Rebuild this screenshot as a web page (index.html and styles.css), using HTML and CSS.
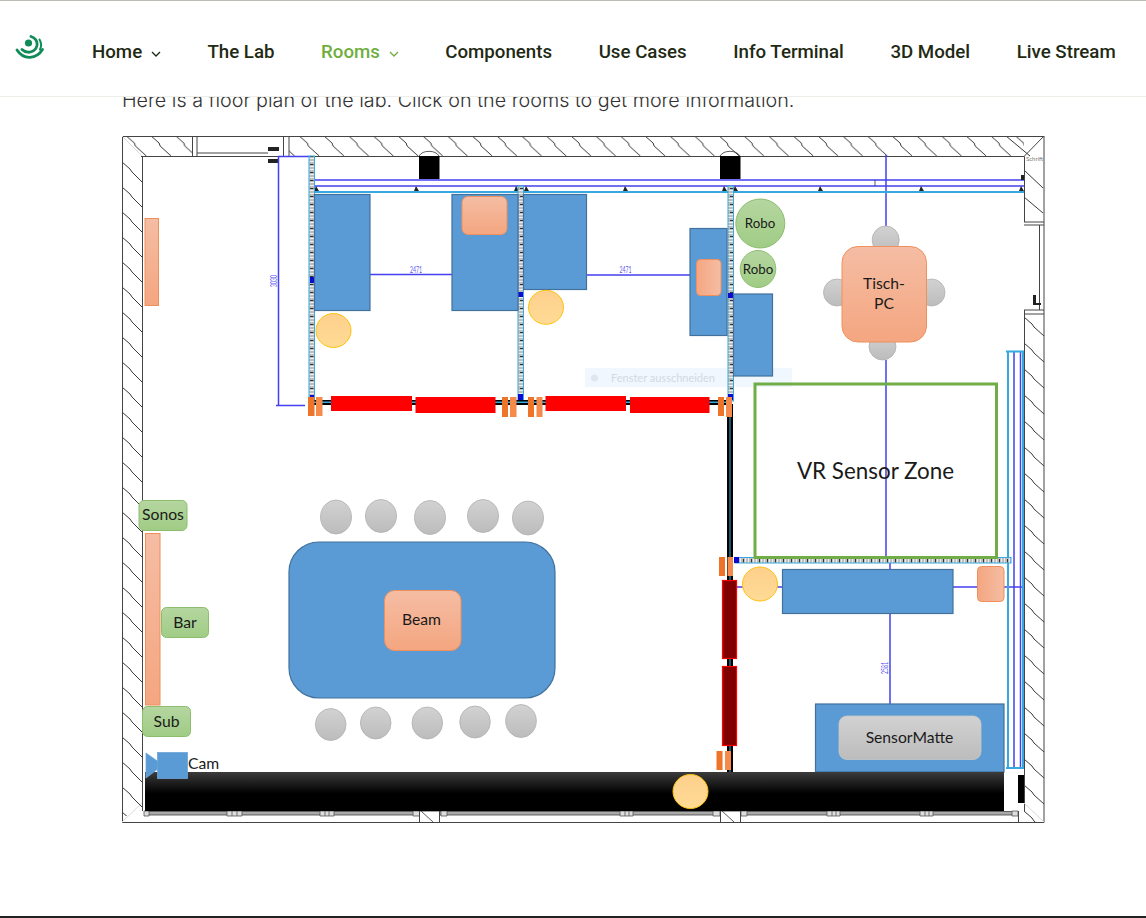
FILE: index.html
```html
<!DOCTYPE html>
<html>
  <head>
    <meta charset="UTF-8" />
    <title>Rooms</title>
    <link rel="stylesheet" href="styles.css">
  </head>

  <body>
    <header class="site-header">
      <a class="logo" href="#">
        <svg width="30" height="26" viewBox="0 0 30 26">
          <circle class="logo-dot" cx="13.500" cy="8" r="3.600"/>
          <path class="logo-arc" d="M16 1.500C20.500 3 22.500 6.500 22 10.500C21.200 15 17 17.500 13 17.200C10.500 17 8.500 16 7 14.500"/>
          <path class="logo-arc" d="M2 15C5.500 20.500 10 22.500 15 22.300C20 22 24.500 19.500 27.500 14.500"/>
          <path class="logo-arc-thin" d="M24.500 4.500C26.500 8 26.500 11.500 25 14.500"/>
        </svg>
      </a>
      <nav class="main-nav">
        <a href="#">Home <svg class="chevron" width="10" height="6" viewBox="0 0 10 6"><path d="M1 1l4 4 4-4"/></svg></a>
        <a href="#">The Lab</a>
        <a href="#" class="current">Rooms <svg class="chevron" width="10" height="6" viewBox="0 0 10 6"><path d="M1 1l4 4 4-4"/></svg></a>
        <a href="#">Components</a>
        <a href="#">Use Cases</a>
        <a href="#">Info Terminal</a>
        <a href="#">3D Model</a>
        <a href="#">Live Stream</a>
      </nav>
    </header>

    <main class="content">
      <p class="intro">Here is a floor plan of the lab. Click on the rooms to get more information.</p>

      <svg class="floorplan" width="923" height="688" viewBox="122 136 923 688">
        <defs>
          <pattern id="hatch-top" x="126.400" y="136" width="24.700" height="20" patternUnits="userSpaceOnUse">
            <path d="M0 0L8 7L9 10L20 20" class="hatch"/>
          </pattern>
          <pattern id="hatch-left" x="122" y="162" width="20" height="25" patternUnits="userSpaceOnUse">
            <path d="M0 0L8 7L10 10L20 20" class="hatch"/>
          </pattern>
          <pattern id="hatch-right" x="1024" y="317" width="20" height="26" patternUnits="userSpaceOnUse">
            <path d="M0 0L8 7L10 10L20 19" class="hatch"/>
          </pattern>
          <pattern id="studs-v" x="309" y="156" width="6" height="8" patternUnits="userSpaceOnUse">
            <rect width="6" height="8" fill="#bdbdbd"/>
            <rect y="2" width="6" height="1" fill="#eee"/>
            <rect y="5" width="6" height="1" fill="#eee"/>
            <rect x="1" y="0" width="3.500" height="1" fill="#333"/>
          </pattern>
          <pattern id="studs-h" x="735" y="558" width="8" height="6" patternUnits="userSpaceOnUse">
            <rect width="8" height="6" fill="#bdbdbd"/>
            <rect x="2" width="1" height="6" fill="#eee"/>
            <rect x="5" width="1" height="6" fill="#eee"/>
            <rect x="0" y="1" width="1" height="3.500" fill="#333"/>
          </pattern>
          <linearGradient id="peach" x1="0" y1="0" x2="0" y2="1">
            <stop offset="0" stop-color="#f5bda4"/>
            <stop offset="1" stop-color="#f4a680"/>
          </linearGradient>
          <linearGradient id="peach-h" x1="0" y1="0" x2="1" y2="0">
            <stop offset="0" stop-color="#f4a680"/>
            <stop offset="1" stop-color="#f5bda4"/>
          </linearGradient>
          <linearGradient id="sun" x1="0" y1="0" x2="0" y2="1">
            <stop offset="0" stop-color="#fdd08c"/>
            <stop offset="1" stop-color="#ffdb95"/>
          </linearGradient>
          <linearGradient id="leaf" x1="0" y1="0" x2="0" y2="1">
            <stop offset="0" stop-color="#b5d6a0"/>
            <stop offset="1" stop-color="#a0cc85"/>
          </linearGradient>
          <linearGradient id="stone" x1="0" y1="0" x2="0" y2="1">
            <stop offset="0" stop-color="#d2d2d2"/>
            <stop offset="1" stop-color="#bcbcbc"/>
          </linearGradient>
          <linearGradient id="bar" x1="0" y1="0" x2="0" y2="1">
            <stop offset="0" stop-color="#3c3c3c"/>
            <stop offset="0.55" stop-color="#000"/>
            <stop offset="1" stop-color="#000"/>
          </linearGradient>
        </defs>

        <!-- walls -->
        <rect x="122" y="136" width="70" height="20" fill="url(#hatch-top)"/>
        <rect x="289" y="136" width="735" height="20" fill="url(#hatch-top)"/>
        <rect x="122" y="156" width="20" height="660" fill="url(#hatch-left)"/>
        <rect x="1024" y="310" width="20" height="512" fill="url(#hatch-right)"/>
        <path class="hatch" d="M1024 170L1043 188M1024 197L1043 213M1006 136L1030 156"/>
        <path class="wall" d="M122.500 136.500H1044M122.500 136.500V822.500H1044V136M142.500 156.500V811M142 156.500H1024.500V222M1024.500 310V811M1024 222H1044M1024 225H1044M1024 310H1044M1024 314H1044M1039.500 225V310M192.500 136V156M197 136V156M283.500 136V156M289 136V156M197 153H268M1024.500 156L1044 136M1018.500 811V822"/>
        <path class="wall-pale" d="M122 136L142 156M122 822L142 803M1024 803L1044 822"/>
        <path class="mark" d="M268 147h11v4h-11zM268 159h11v4h-11zM1033 295h3v8h5v2h-8z"/>
        <rect class="black" x="419" y="156" width="20.500" height="23"/>
        <rect class="black" x="720" y="156" width="20.500" height="23"/>
        <path class="thin" d="M419 156A11 8 0 0 1 439 156M720 156A11 8 0 0 1 740 156"/>
        <text class="tiny" x="1026" y="161">Schrift</text>

        <!-- ghost tooltip from the snipping tool -->
        <rect class="ghost" x="585" y="368" width="207" height="19"/>
        <circle class="ghost-dot" cx="594.500" cy="378" r="3.500"/>
        <text class="ghost-text" x="611" y="382">Fenster ausschneiden</text>

        <!-- dimension lines -->
        <path class="dim" d="M278.500 156V405M278 156.500H310M276 405.500H305M314 180H1024M314 186H1024M886 155V247M886 360V383M886 384V563M370 274.500H452M587 275H690M890 563V569M890 613V704M735 587H782M953 587H977M1004 587H1024M1014 351V768M1020.500 351V768"/>
        <path class="cyan" d="M314 192H680M680 192H1024M1008 351V768M1023 351V768M1006 351.500H1024M1006 768H1024"/>
        <path class="thin" d="M875 180V186"/>
        <text class="dim-text" x="410" y="273" textLength="12" lengthAdjust="spacingAndGlyphs">2471</text>
        <text class="dim-text" x="619.500" y="273" textLength="12" lengthAdjust="spacingAndGlyphs">2471</text>
        <text class="dim-text" transform="translate(277 287) rotate(-90)" textLength="12" lengthAdjust="spacingAndGlyphs">3030</text>
        <text class="dim-text" transform="translate(888 674) rotate(-90)" textLength="12" lengthAdjust="spacingAndGlyphs">2581</text>
        <path class="mark" d="M316 186l-2 5h5zM416 186l-2 5h5zM516 186l-2 5h5zM526 186l-2 5h5zM625 186l-2 5h5zM724 186l-2 5h5zM735 186l-2 5h5zM820 186l-2 5h5zM921 186l-2 5h5zM1021 186l-2 5h5zM1021 175h3v5h-3z"/>

        <!-- partitions -->
        <rect class="stud" x="309" y="156" width="5.500" height="245" fill="url(#studs-v)"/>
        <rect class="stud" x="518" y="186" width="5.500" height="215" fill="url(#studs-v)"/>
        <rect class="stud" x="728" y="186" width="5.500" height="215" fill="url(#studs-v)"/>
        <rect class="black" x="314" y="400" width="414" height="5"/>
        <rect class="cyan-fill" x="314" y="401.500" width="414" height="1.500"/>
        <rect class="stud" x="735" y="557.500" width="276" height="5.500" fill="url(#studs-h)"/>
        <rect class="black" x="727" y="404" width="6" height="368"/>
        <rect class="cyan-fill" x="729.500" y="404" width="1" height="368"/>
        <path class="mark-blue" d="M310 277h4v6h-4zM518 292h5v5h-5zM728 293h5v5h-5zM310 395h4v6h-4zM518 394h5v6h-5zM728 394h5v6h-5zM734 557h5v6h-5z"/>

        <!-- desks -->
        <rect class="desk" x="314.500" y="194.500" width="55.500" height="116"/>
        <rect class="desk" x="452" y="194.500" width="66" height="116"/>
        <rect class="desk" x="523.500" y="194.500" width="63" height="95"/>
        <rect class="desk" x="690" y="228.500" width="37" height="107"/>
        <rect class="desk" x="733.500" y="294" width="39" height="82"/>
        <rect class="desk" x="782.500" y="569.500" width="170.500" height="44"/>
        <rect class="desk" x="815.500" y="704" width="188.500" height="68"/>
        <rect class="desk" x="289" y="542" width="266" height="156" rx="30"/>

        <rect class="peach" x="462" y="196.500" width="45" height="38" rx="6"/>
        <rect class="peach-h" x="696.500" y="259.500" width="24.500" height="36" rx="4"/>
        <rect class="peach-h" x="977.500" y="566.500" width="26.500" height="35" rx="4"/>
        <rect class="peach" x="145" y="218.500" width="13.500" height="87"/>
        <rect class="peach" x="145.500" y="533.500" width="14.500" height="171.500"/>

        <!-- seats -->
        <ellipse class="seat" cx="885.700" cy="240" rx="13.500" ry="14"/>
        <ellipse class="seat" cx="882.500" cy="346.500" rx="13.500" ry="13.500"/>
        <ellipse class="seat" cx="837" cy="292.500" rx="13.500" ry="13.500"/>
        <ellipse class="seat" cx="931.500" cy="292.500" rx="13.500" ry="13.500"/>
        <ellipse class="seat" cx="336" cy="517" rx="15.500" ry="17"/>
        <ellipse class="seat" cx="381" cy="516" rx="15.500" ry="16.500"/>
        <ellipse class="seat" cx="430" cy="517.500" rx="15.500" ry="17"/>
        <ellipse class="seat" cx="483" cy="516" rx="15.500" ry="16.500"/>
        <ellipse class="seat" cx="528" cy="518" rx="15.500" ry="17"/>
        <ellipse class="seat" cx="330.700" cy="724.500" rx="15.300" ry="16"/>
        <ellipse class="seat" cx="375.700" cy="723" rx="15.300" ry="16"/>
        <ellipse class="seat" cx="427.300" cy="723" rx="15.300" ry="16"/>
        <ellipse class="seat" cx="475" cy="722" rx="15.300" ry="16"/>
        <ellipse class="seat" cx="521" cy="721" rx="15.300" ry="16.500"/>

        <rect class="peach" x="842" y="246.500" width="84.500" height="95.500" rx="16"/>
        <text class="label" x="884" y="289" text-anchor="middle">Tisch-</text>
        <text class="label" x="884" y="309" text-anchor="middle">PC</text>
        <rect class="peach" x="384.500" y="590.500" width="76.500" height="60" rx="10"/>
        <text class="label" x="421.500" y="625" text-anchor="middle">Beam</text>

        <!-- people -->
        <ellipse class="person" cx="333.500" cy="330.500" rx="17.500" ry="17"/>
        <ellipse class="person" cx="546" cy="307.300" rx="17.500" ry="17"/>
        <ellipse class="person" cx="760" cy="584" rx="17.500" ry="17"/>

        <!-- robots and green boxes -->
        <ellipse class="leaf" cx="760.300" cy="223.500" rx="24.500" ry="24.500"/>
        <ellipse class="leaf" cx="758" cy="269" rx="17.800" ry="18.500"/>
        <text class="label-small" x="760" y="228" text-anchor="middle">Robo</text>
        <text class="label-small" x="758" y="274" text-anchor="middle">Robo</text>
        <rect class="leaf" x="139" y="500.500" width="48" height="30" rx="5"/>
        <rect class="leaf" x="161.500" y="607.500" width="47" height="30" rx="5"/>
        <rect class="leaf" x="142.500" y="706.500" width="48" height="30" rx="5"/>
        <text class="label" x="163" y="520" text-anchor="middle">Sonos</text>
        <text class="label" x="185" y="627.500" text-anchor="middle">Bar</text>
        <text class="label" x="166.500" y="726.500" text-anchor="middle">Sub</text>
        <text class="label" x="188" y="769">Cam</text>

        <!-- sliding doors -->
        <rect class="red" x="331" y="396" width="81" height="15"/>
        <rect class="red" x="415.500" y="397" width="80" height="16"/>
        <rect class="red" x="545.500" y="396" width="80.500" height="15"/>
        <rect class="red" x="630" y="397" width="79.500" height="16"/>
        <rect class="dark-red" x="722.500" y="580.500" width="14" height="78"/>
        <rect class="dark-red" x="722.500" y="666.500" width="14" height="79"/>
        <rect class="orange" x="308" y="397" width="6.500" height="19"/>
        <rect class="orange-light" x="316" y="397" width="6.500" height="19"/>
        <rect class="orange" x="502" y="397" width="6" height="20"/>
        <rect class="orange-light" x="510" y="397" width="6.500" height="20"/>
        <rect class="orange" x="528" y="397" width="6" height="20"/>
        <rect class="orange-light" x="536.500" y="397" width="6" height="20"/>
        <rect class="orange" x="718" y="397" width="6" height="19"/>
        <rect class="orange-light" x="726" y="397" width="6" height="20"/>
        <rect class="orange" x="719" y="557" width="6" height="19"/>
        <rect class="orange-light" x="727.500" y="557" width="5.500" height="19"/>
        <rect class="orange" x="716.500" y="751" width="6" height="19"/>
        <rect class="orange-light" x="725" y="751" width="6" height="19"/>

        <!-- VR zone -->
        <rect class="zone" x="755" y="384" width="241.500" height="173.500"/>
        <text class="label-large" x="875.500" y="479" text-anchor="middle">VR Sensor Zone</text>

        <rect class="stone" x="839" y="716" width="142" height="43.500" rx="8"/>
        <text class="label" x="909.500" y="742.500" text-anchor="middle">SensorMatte</text>

        <!-- bar along the bottom wall -->
        <rect class="sill" x="145" y="811.500" width="873" height="3.500"/>
        <path class="connector" d="M227 811h15v5h-15zM232 811v5M237 811v5M320 811h14v5h-14zM325 811v5M329 811v5M413 811h7v5h-7zM441 811h6v5h-6zM620 811h13v5h-13zM625 811v5M629 811v5M713 811h7v5h-7zM741 811h6v5h-6zM827 811h13v5h-13zM832 811v5M836 811v5M920 811h13v5h-13zM925 811v5M929 811v5M1012 811h6v5h-6zM144 811h5v5h-5z"/>
        <rect class="post" x="419.500" y="811" width="20" height="11.500"/>
        <rect class="post" x="720.500" y="811" width="20" height="11.500"/>
        <path class="thin" d="M421 811L433 822M722 811L734 822"/>
        <rect x="145" y="772" width="859" height="39" fill="url(#bar)"/>
        <rect class="black" x="1018" y="775" width="6" height="28"/>
        <ellipse class="person" cx="690.500" cy="791.500" rx="17.500" ry="17"/>

        <!-- camera sits over the bar -->
        <path class="desk-plain" d="M146 753L163 765L146 778Z"/>
        <rect class="desk-plain" x="157.500" y="752.500" width="30" height="26"/>
      </svg>
    </main>

    <footer class="site-footer"></footer>
  </body>
</html>
```

FILE: styles.css
```css
body {
  margin: 0;
  height: 918px;
  overflow: hidden;
  background-color: white;
  font-family: "Inter", "Liberation Sans", sans-serif;
  position: relative;
}

.site-header {
  position: absolute;
  top: 0;
  left: 0;
  right: 0;
  z-index: 2;
  height: 95px;
  display: flex;
  align-items: center;
  background-color: white;
  border-top: 1px solid #bdbdb8;
  border-bottom: 1px solid #eeeee8;
  box-sizing: content-box;
}

.logo {
  display: flex;
  margin-left: 15px;
  margin-top: -2px;
}

.logo-dot {
  fill: #0f8c58;
}

.logo-arc {
  fill: none;
  stroke: #0f8c58;
  stroke-width: 2.800;
  stroke-linecap: round;
}

.logo-arc-thin {
  fill: none;
  stroke: #0f8c58;
  stroke-width: 2;
  stroke-linecap: round;
}

.main-nav {
  display: flex;
  align-items: center;
  gap: 46.600px;
  margin-left: 47px;
  margin-top: 6px;
}

.main-nav a {
  color: #1f2a14;
  font-family: "Roboto", sans-serif;
  font-weight: 500;
  font-size: 18.700px;
  text-decoration: none;
  white-space: nowrap;
}

.main-nav a.current {
  color: #6fae3e;
}

.chevron {
  margin-left: 4px;
  vertical-align: 1px;
  fill: none;
  stroke: currentColor;
  stroke-width: 1.300;
}

.content {
  padding: 89px 0 0 122px;
}

.intro {
  margin: 0 0 25px 0;
  font-family: "Inter", sans-serif;
  font-weight: 300;
  font-size: 19.750px;
  line-height: 22px;
  color: #333;
}

.floorplan {
  display: block;
}

.site-footer {
  position: absolute;
  left: 0;
  right: 0;
  bottom: 0;
  height: 2px;
  background-color: #222;
}

/* floor plan */
.hatch {
  fill: none;
  stroke: #222;
  stroke-width: 0.900;
}

.wall {
  fill: none;
  stroke: #444;
  stroke-width: 1;
}

.wall-pale {
  fill: none;
  stroke: #d8d8d8;
  stroke-width: 1;
}

.thin {
  fill: none;
  stroke: #333;
  stroke-width: 0.800;
}

.mark {
  fill: #222;
}

.mark-blue {
  fill: #0a0ad0;
}

.sill {
  fill: #aaa;
  stroke: #444;
  stroke-width: 0.800;
}

.connector {
  fill: #ddd;
  stroke: #555;
  stroke-width: 0.800;
}

.black {
  fill: black;
}

.post {
  fill: white;
  stroke: #444;
  stroke-width: 1;
}

.tiny {
  font-family: "Lato", sans-serif;
  font-size: 6px;
  fill: #777;
}

.ghost {
  fill: #f0f7fe;
}

.ghost-dot {
  fill: #dfe6ec;
}

.ghost-text {
  font-family: "Lato", sans-serif;
  font-size: 11px;
  fill: #d3dae1;
}

.dim {
  fill: none;
  stroke: #4440f0;
  stroke-width: 1.500;
}

.cyan {
  fill: none;
  stroke: #35a9e0;
  stroke-width: 2;
}

.cyan-fill {
  fill: #35a9e0;
}

.dim-text {
  font-family: "Lato", sans-serif;
  font-size: 9px;
  fill: #5a56f0;
}

.stud {
  stroke: #35a9e0;
  stroke-width: 1;
}

.desk {
  fill: #5b9bd5;
  stroke: #41719c;
  stroke-width: 1.200;
}

.desk-plain {
  fill: #5b9bd5;
  stroke: #6ea6d8;
  stroke-width: 0.800;
}

.peach {
  fill: url(#peach);
  stroke: #ef8f5c;
  stroke-width: 1;
}

.peach-h {
  fill: url(#peach-h);
  stroke: #ef8f5c;
  stroke-width: 1;
}

.seat {
  fill: url(#stone);
  stroke: #b0b0b0;
  stroke-width: 0.800;
}

.stone {
  fill: url(#stone);
  stroke: #c8c8c8;
  stroke-width: 0.800;
}

.person {
  fill: url(#sun);
  stroke: #ffc20e;
  stroke-width: 1;
}

.leaf {
  fill: url(#leaf);
  stroke: #8dbe6e;
  stroke-width: 1;
}

.label {
  font-family: "Lato", sans-serif;
  font-size: 15.700px;
  fill: #1a1a1a;
}

.label-small {
  font-family: "Lato", sans-serif;
  font-size: 13.300px;
  fill: #1a1a1a;
}

.label-large {
  font-family: "Lato", sans-serif;
  font-size: 22.400px;
  fill: #1a1a1a;
}

.red {
  fill: #ff0000;
}

.dark-red {
  fill: #800000;
  stroke: #ff0000;
  stroke-width: 1.200;
}

.orange {
  fill: #ed7428;
}

.orange-light {
  fill: #f58a4b;
}

.zone {
  fill: none;
  stroke: #70ad47;
  stroke-width: 3;
}
```
